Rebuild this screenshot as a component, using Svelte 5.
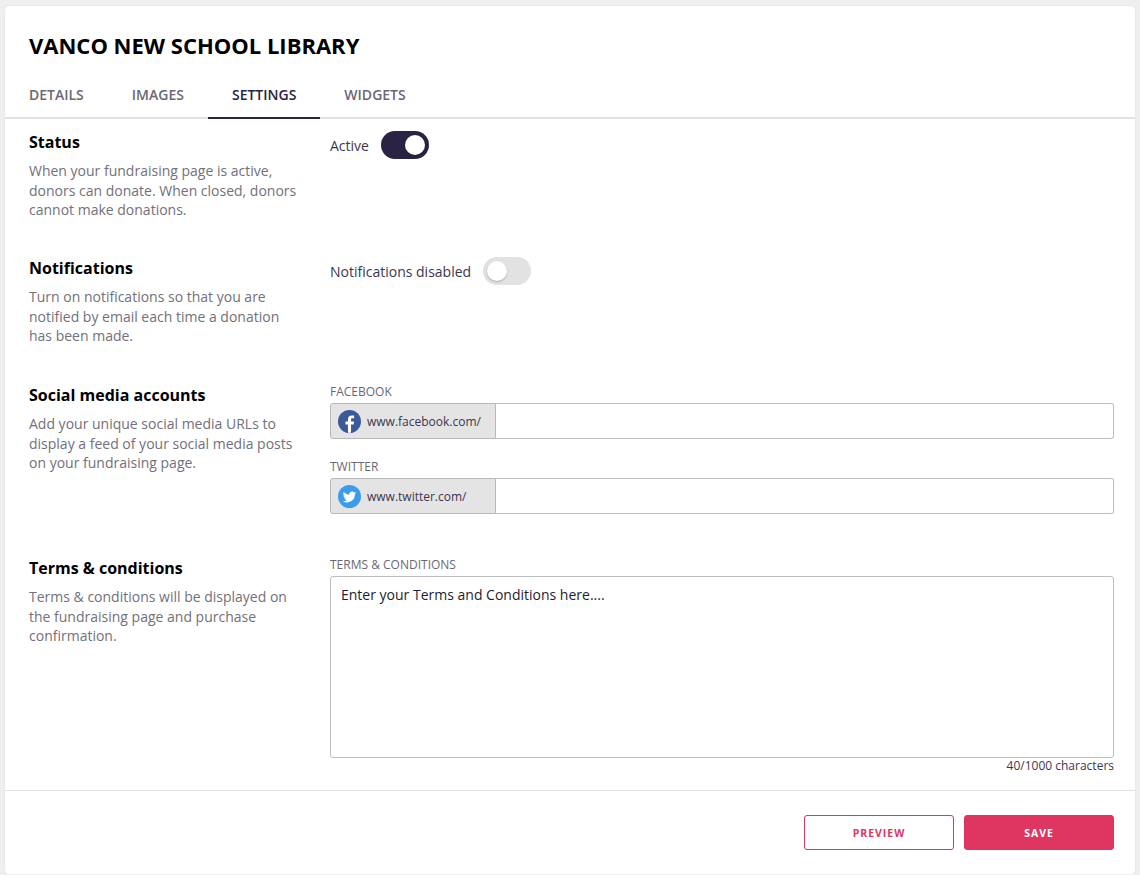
<script lang="ts">
  let tabs = ['DETAILS', 'IMAGES', 'SETTINGS', 'WIDGETS'];
  let active = 'SETTINGS';
  let statusOn = $state(true);
  let notifyOn = $state(false);
  let terms = $state('Enter your Terms and Conditions here....');
</script>

<div class="card">
  <header class="head">
    <h1>VANCO NEW SCHOOL LIBRARY</h1>
    <nav class="tabs">
      {#each tabs as tab}
        <button type="button" class="tab" class:active={tab === active}>{tab}</button>
      {/each}
    </nav>
  </header>

  <div class="body">
    <section class="row status">
      <div class="info">
        <h2>Status</h2>
        <p>When your fundraising page is active, donors can donate. When closed, donors cannot make donations.</p>
      </div>
      <div class="toggle-line">
        <span>Active</span>
        <button type="button" class="switch" class:on={statusOn} aria-label="Active" onclick={() => (statusOn = !statusOn)}><i></i></button>
      </div>
    </section>

    <section class="row notifications">
      <div class="info">
        <h2>Notifications</h2>
        <p>Turn on notifications so that you are notified by email each time a donation has been made.</p>
      </div>
      <div class="toggle-line">
        <span>Notifications disabled</span>
        <button type="button" class="switch" class:on={notifyOn} aria-label="Notifications" onclick={() => (notifyOn = !notifyOn)}><i></i></button>
      </div>
    </section>

    <section class="row social">
      <div class="info">
        <h2>Social media accounts</h2>
        <p>Add your unique social media URLs to display a feed of your social media posts on your fundraising page.</p>
      </div>
      <div class="fields">
        <label class="field">
          <span class="label">FACEBOOK</span>
          <span class="url">
            <span class="prefix">
              <svg viewBox="0 0 24 24" width="23" height="23" aria-hidden="true">
                <circle cx="12" cy="12" r="12" fill="#3b5998" />
                <path fill="#fff" d="M13.6 23.8v-8.6h2.7l.4-3.1h-3.1v-1.9c0-.9.25-1.5 1.5-1.5h1.7V5.9c-.3 0-1.3-.1-2.4-.1-2.4 0-4 1.45-4 4.1v2.2H7.8v3.1h2.6v8.6z" />
              </svg>
              www.facebook.com/
            </span>
            <input type="text" />
          </span>
        </label>
        <label class="field">
          <span class="label">TWITTER</span>
          <span class="url">
            <span class="prefix">
              <svg viewBox="0 0 24 24" width="23" height="23" aria-hidden="true">
                <circle cx="12" cy="12" r="12" fill="#3b9cee" />
                <path fill="#fff" d="M19 8.1c-.5.23-1.05.38-1.65.45.6-.36 1.05-.92 1.27-1.59-.56.33-1.17.57-1.83.7a2.88 2.88 0 0 0-4.9 2.63A8.17 8.17 0 0 1 6 7.28a2.88 2.88 0 0 0 .89 3.84c-.47-.01-.92-.14-1.3-.36v.04c0 1.4 1 2.56 2.31 2.82-.42.11-.87.13-1.3.05a2.88 2.88 0 0 0 2.69 2A5.8 5.8 0 0 1 5 16.87 8.15 8.15 0 0 0 17.55 9.6c.57-.4 1.06-.92 1.45-1.5z" />
              </svg>
              www.twitter.com/
            </span>
            <input type="text" />
          </span>
        </label>
      </div>
    </section>

    <section class="row terms">
      <div class="info">
        <h2>Terms &amp; conditions</h2>
        <p>Terms &amp; conditions will be displayed on the fundraising page and purchase confirmation.</p>
      </div>
      <label class="field">
        <span class="label">TERMS &amp; CONDITIONS</span>
        <textarea bind:value={terms}></textarea>
        <span class="count">{terms.length}/1000 characters</span>
      </label>
    </section>
  </div>

  <footer class="foot">
    <button type="button" class="btn outline">PREVIEW</button>
    <button type="button" class="btn solid">SAVE</button>
  </footer>
</div>

<style>
  :global(body) {
    background: #efefef;
    font-family: "Open Sans", "Noto Sans", sans-serif;
  }
  .card {
    box-sizing: border-box;
    width: 1130px;
    height: 868px;
    margin: 6px 0 0 5px;
    background: #fff;
    border-radius: 4px;
    box-shadow: 0 0 1px rgba(0, 0, 0, 0.2);
    display: flex;
    flex-direction: column;
  }
  .head {
    padding-top: 24px;
    border-bottom: 2px solid #e2e2e2;
  }
  h1 {
    margin: 0 0 0 24px;
    font-size: 22px;
    line-height: 30px;
    font-weight: 700;
    color: #000;
  }
  .tabs {
    display: flex;
    margin-top: 15px;
    margin-bottom: -2px;
  }
  .tab {
    padding: 0 24px 4px;
    height: 44px;
    border: 0;
    border-bottom: 2px solid transparent;
    background: none;
    font: 600 14px "Open Sans", sans-serif;
    color: #6b6873;
  }
  .tab.active {
    color: #2a2344;
    border-bottom-color: #2a2344;
  }
  .body {
    flex: 1;
    padding: 0 21px 0 24px;
  }
  .row {
    display: grid;
    grid-template-columns: 277px 1fr;
    gap: 24px;
    align-items: start;
    box-sizing: border-box;
    padding-top: 11px;
  }
  .status { height: 126px; }
  .notifications { height: 127px; }
  .social { height: 173px; }
  .info { max-width: 270px; }
  h2 {
    margin: 0;
    font-size: 16px;
    line-height: 24px;
    font-weight: 700;
    color: #000;
  }
  p {
    margin: 7px 0 0;
    font-size: 14px;
    line-height: 19.5px;
    color: #73707a;
  }
  .toggle-line {
    display: flex;
    align-items: center;
    gap: 12px;
    height: 28px;
    margin-top: 1px;
    font-size: 14px;
    color: #3a3650;
  }
  .switch {
    width: 48px;
    height: 28px;
    padding: 4px;
    border: 0;
    border-radius: 14px;
    background: #e2e2e2;
    display: flex;
  }
  .switch i {
    width: 20px;
    height: 20px;
    border-radius: 50%;
    background: #fff;
    box-shadow: 0 1px 2px rgba(0, 0, 0, 0.25);
  }
  .switch.on { background: #2a2344; justify-content: flex-end; }
  .fields {
    display: flex;
    flex-direction: column;
    gap: 20px;
    margin-top: 1px;
  }
  .terms > .field { margin-top: 1px; }
  .field { display: block; }
  .label {
    display: block;
    font-size: 12px;
    line-height: 16px;
    color: #6b6873;
    margin-bottom: 3px;
  }
  .url {
    display: flex;
    height: 36px;
  }
  .prefix {
    box-sizing: border-box;
    width: 166px;
    display: flex;
    align-items: center;
    gap: 6px;
    padding-left: 7px;
    background: #e4e4e4;
    border: 1px solid #b8b8b8;
    border-radius: 3px 0 0 3px;
    font-size: 12px;
    color: #3a3650;
  }
  input {
    flex: 1;
    min-width: 0;
    box-sizing: border-box;
    border: 1px solid #bdbdbd;
    border-left: 0;
    border-radius: 0 3px 3px 0;
    outline: 0;
  }
  textarea {
    display: block;
    box-sizing: border-box;
    width: 100%;
    height: 182px;
    padding: 8px 10px;
    border: 1px solid #bdbdbd;
    border-radius: 3px;
    outline: 0;
    resize: none;
    font: 14px/20px "Open Sans", sans-serif;
    color: #1f1c2e;
  }
  .count {
    display: block;
    text-align: right;
    font-size: 12px;
    line-height: 16px;
    color: #3a3650;
  }
  .foot {
    border-top: 1px solid #e2e2e2;
    height: 84px;
    box-sizing: border-box;
    padding: 24px 21px 0 0;
    display: flex;
    justify-content: flex-end;
    gap: 10px;
  }
  .btn {
    box-sizing: border-box;
    width: 150px;
    height: 35px;
    border-radius: 3px;
    font: 700 10.5px "Open Sans", sans-serif;
    letter-spacing: 1px;
    border: 1px solid #de3561;
  }
  .outline { background: #fff; color: #de3561; }
  .solid { background: #de3561; color: #fff; }
</style>
